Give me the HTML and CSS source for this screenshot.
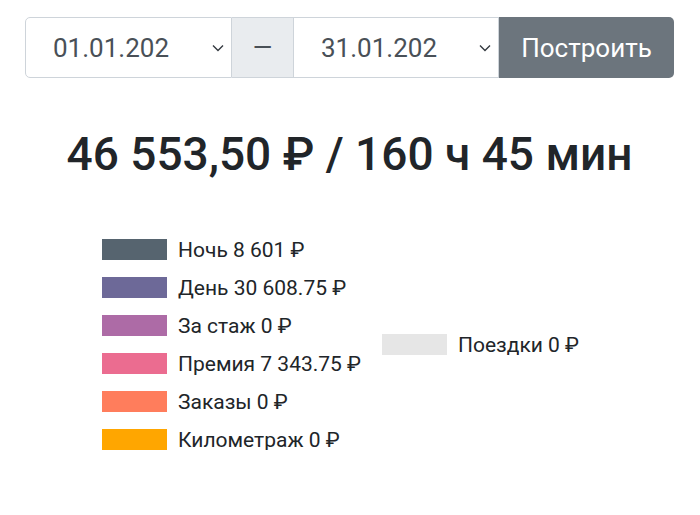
FILE: index.html
```html
<!DOCTYPE html>
<html lang="ru">
<head>
    <meta charset="UTF-8">
    <meta name="viewport" content="width=device-width, initial-scale=1.0">
    <title>Отчёт за период</title>
    <link rel="stylesheet" href="styles.css">
</head>
<body>
    <div class="page">
        <!-- Period picker -->
        <div class="range">
            <div class="field field-from">
                <span class="field-text">01.01.202</span>
                <svg class="chevron" width="12" height="8" viewBox="0 0 12 8"><path d="M1 1.5 L6 6.5 L11 1.5" fill="none" stroke="#343a40" stroke-width="1.4"/></svg>
            </div>
            <div class="range-sep">&mdash;</div>
            <div class="field field-to">
                <span class="field-text">31.01.202</span>
                <svg class="chevron" width="12" height="8" viewBox="0 0 12 8"><path d="M1 1.5 L6 6.5 L11 1.5" fill="none" stroke="#343a40" stroke-width="1.4"/></svg>
            </div>
            <button class="build-btn" type="button">Построить</button>
        </div>

        <h1 class="total">46 553,50 ₽ / 160 ч 45 мин</h1>

        <!-- Chart legend -->
        <div class="legend">
            <div class="legend-col">
                <div class="legend-item"><span class="swatch swatch-night"></span>Ночь 8 601 ₽</div>
                <div class="legend-item"><span class="swatch swatch-day"></span>День 30 608.75 ₽</div>
                <div class="legend-item"><span class="swatch swatch-exp"></span>За стаж 0 ₽</div>
                <div class="legend-item"><span class="swatch swatch-bonus"></span>Премия 7 343.75 ₽</div>
                <div class="legend-item"><span class="swatch swatch-orders"></span>Заказы 0 ₽</div>
                <div class="legend-item"><span class="swatch swatch-km"></span>Километраж 0 ₽</div>
            </div>
            <div class="legend-col">
                <div class="legend-item"><span class="swatch swatch-trips"></span>Поездки 0 ₽</div>
            </div>
        </div>
    </div>
</body>
</html>
```

FILE: styles.css
```css
* {
    margin: 0;
    padding: 0;
    box-sizing: border-box;
}

body {
    font-family: Roboto, 'Liberation Sans', sans-serif;
    color: #212529;
    background: #fff;
}

.page {
    padding: 17px 26px 0 25px;
}

/* Period picker */
.range {
    display: flex;
    height: 61px;
}

.field {
    display: flex;
    align-items: center;
    justify-content: space-between;
    padding: 0 7px 0 27px;
    border: 1px solid #ced4da;
    background: #fff;
    color: #495057;
    font-size: 26px;
}

.field-from {
    width: 207px;
    border-radius: 5px 0 0 5px;
}

.field-to {
    width: 205px;
    border-left: none;
}

.chevron {
    margin-top: 1px;
}

.range-sep {
    width: 62px;
    display: flex;
    align-items: center;
    justify-content: center;
    background: #e9ecef;
    border: 1px solid #ced4da;
    border-left: none;
    color: #495057;
    font-size: 25px;
}

.build-btn {
    flex: 1;
    border: none;
    border-radius: 0 5px 5px 0;
    background: #6c757d;
    color: #fff;
    font-family: inherit;
    font-size: 26px;
    cursor: pointer;
}

/* Total */
.total {
    margin-top: 49px;
    text-align: center;
    font-size: 46px;
    font-weight: 500;
    line-height: 1.2;
    color: #212529;
}

/* Legend */
.legend {
    display: flex;
    align-items: center;
    margin: 57px 0 0 77px;
}

.legend-col {
    display: flex;
    flex-direction: column;
    gap: 17px;
}

.legend-col:first-child {
    width: 280px;
}

.legend-item {
    display: flex;
    align-items: center;
    height: 21px;
    font-size: 21px;
    color: #212529;
}

.swatch {
    width: 65px;
    height: 21px;
    margin-right: 11px;
}

.swatch-night { background: #56646f; }
.swatch-day { background: #6d6998; }
.swatch-exp { background: #ad6ba6; }
.swatch-bonus { background: #eb6c90; }
.swatch-orders { background: #ff7d5c; }
.swatch-km { background: #ffa600; }
.swatch-trips { background: #e6e6e6; }
```
